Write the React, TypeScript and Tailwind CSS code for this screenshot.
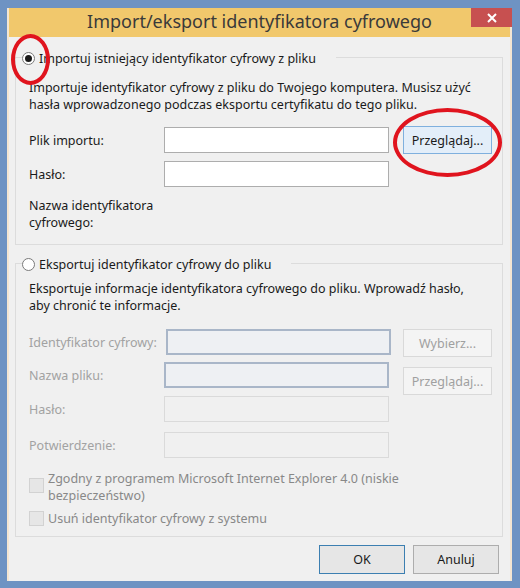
import type { ReactNode } from 'react'

const font = { fontFamily: '"Segoe UI", "Noto Sans", "Liberation Sans", sans-serif' }

function Radio({ checked }: { checked?: boolean }) {
  return (
    <span className="flex h-[13px] w-[13px] shrink-0 items-center justify-center rounded-full border border-[#7a7a7a] bg-white">
      {checked && <span className="h-[7px] w-[7px] rounded-full bg-[#1a1a1a]" />}
    </span>
  )
}

function Field({ disabled, blue, className = '' }: { disabled?: boolean; blue?: boolean; className?: string }) {
  let look = 'bg-white border-[#adadad]'
  if (disabled) look = blue ? 'bg-[#eef0f3] border-[#a9b6c8] border-2' : 'bg-[#f0f0f0] border-[#dadada]'
  return <div className={`h-[26px] w-[225px] shrink-0 border ${look} ${className}`} />
}

function Btn({
  children,
  variant = 'normal',
  className = 'h-[28px] w-[89px]',
}: {
  children: ReactNode
  variant?: 'normal' | 'focus' | 'disabled' | 'default'
  className?: string
}) {
  const look =
    variant === 'focus'
      ? 'bg-[#e3eef9] border-[#7fb0de] text-[#1a1a1a]'
      : variant === 'default'
        ? 'bg-[#e6e6e6] border-[#3c7fb1] text-[#1a1a1a]'
        : variant === 'disabled'
          ? 'bg-[#f4f4f4] border-[#d9d9d9] text-[#a0a0a0]'
          : 'bg-[#e6e6e6] border-[#adadad] text-[#1a1a1a]'
  return (
    <div className={`flex shrink-0 items-center justify-center border text-[12.5px] ${look} ${className}`}>
      {children}
    </div>
  )
}

function Row({ label, muted, children }: { label: ReactNode; muted?: boolean; children: ReactNode }) {
  return (
    <div className="flex h-[26px] items-start">
      <div className={`flex h-[26px] w-[135px] shrink-0 items-center ${muted ? 'text-[#a2a2a2]' : ''}`}>{label}</div>
      {children}
    </div>
  )
}

function Group({ header, children, className = '' }: { header: ReactNode; children: ReactNode; className?: string }) {
  return (
    <div className={`border border-[#dcdcdc] pl-[13px] ${className}`}>
      <div className="-mt-[9px] -ml-[7px] flex h-[18px] w-fit items-center gap-[4px] bg-[#f0f0f0] pr-[20px]">{header}</div>
      {children}
    </div>
  )
}

function Check({ children, top }: { children: ReactNode; top?: boolean }) {
  return (
    <div className={`flex gap-[4px] text-[#888888] ${top ? 'items-start' : 'items-center'}`}>
      <span className={`h-[15px] w-[15px] shrink-0 border border-[#d2d2d2] bg-[#e6e6e6] ${top ? 'mt-[8px]' : ''}`} />
      <div className="leading-[17px]">{children}</div>
    </div>
  )
}

export default function App() {
  return (
    <div className="relative h-[588px] w-[520px] overflow-hidden bg-[#6e93c3] pt-[8px] pl-[7px]" style={font}>
      <div className="flex w-[505px] flex-col border-x-2 border-[#f4e6d2]">
        <div className="relative flex h-[29px] items-center justify-center bg-[#f1c86c] text-[18px] text-[#3a3a3a]">
          <span className="-mt-[2px]">Import/eksport identyfikatora cyfrowego</span>
          <div className="absolute top-0 right-[-2px] flex h-[19px] w-[41px] items-center justify-center bg-[#c75050]">
            <svg width="10" height="10" viewBox="0 0 10 10">
              <path d="M1 1L9 9M9 1L1 9" stroke="white" strokeWidth="2" />
            </svg>
          </div>
        </div>

        <div className="flex h-[544px] flex-col bg-[#f0f0f0] pt-[20px] pl-[6px] pr-[7px] text-[12.5px] leading-[17px] text-[#1a1a1a]">
          <Group
            header={
              <>
                <Radio checked />
                <span>Importuj istniejący identyfikator cyfrowy z pliku</span>
              </>
            }
            className="h-[188px]"
          >
            <div className="mt-[12px]">
              Importuje identyfikator cyfrowy z pliku do Twojego komputera. Musisz użyć
              <br />
              hasła wprowadzonego podczas eksportu certyfikatu do tego pliku.
            </div>
            <div className="mt-[14px] flex flex-col gap-[8px]">
              <Row label="Plik importu:">
                <Field />
                <Btn variant="focus" className="-mt-[1px] ml-[14px] h-[28px] w-[89px]">
                  Przeglądaj...
                </Btn>
              </Row>
              <Row label="Hasło:">
                <Field />
              </Row>
            </div>
            <div className="mt-[10px]">
              Nazwa identyfikatora
              <br />
              cyfrowego:
            </div>
          </Group>

          <Group
            header={
              <>
                <Radio />
                <span>Eksportuj identyfikator cyfrowy do pliku</span>
              </>
            }
            className="mt-[18px] h-[274px]"
          >
            <div className="mt-[7px]">
              Eksportuje informacje identyfikatora cyfrowego do pliku. Wprowadź hasło,
              <br />
              aby chronić te informacje.
            </div>
            <div className="mt-[15px] flex flex-col">
              <Row label="Identyfikator cyfrowy:" muted>
                <Field disabled blue className="ml-[2px]" />
                <Btn variant="disabled" className="ml-[12px] h-[28px] w-[89px]">
                  Wybierz...
                </Btn>
              </Row>
              <div className="mt-[7px]">
                <Row label="Nazwa pliku:" muted>
                  <Field disabled blue />
                  <Btn variant="disabled" className="mt-[5px] ml-[14px] h-[28px] w-[89px]">
                    Przeglądaj...
                  </Btn>
                </Row>
              </div>
              <div className="mt-[8px]">
                <Row label="Hasło:" muted>
                  <Field disabled />
                </Row>
              </div>
              <div className="mt-[10px]">
                <Row label="Potwierdzenie:" muted>
                  <Field disabled />
                </Row>
              </div>
            </div>
            <div className="mt-[12px] flex flex-col gap-[6px]">
              <Check top>
                Zgodny z programem Microsoft Internet Explorer 4.0 (niskie
                <br />
                bezpieczeństwo)
              </Check>
              <Check>Usuń identyfikator cyfrowy z systemu</Check>
            </div>
          </Group>

          <div className="mt-[8px] flex justify-end gap-[8px] pr-[4px]">
            <Btn variant="default" className="h-[29px] w-[86px]">
              OK
            </Btn>
            <Btn className="h-[29px] w-[86px]">Anuluj</Btn>
          </div>
        </div>
      </div>

      <div className="pointer-events-none absolute top-[34px] left-[11px] h-[51px] w-[39px] rounded-[50%] border-4 border-[#e0141e]" />
      <div className="pointer-events-none absolute top-[108px] left-[393px] h-[69px] w-[109px] rounded-[50%] border-4 border-[#e0141e]" />
    </div>
  )
}
